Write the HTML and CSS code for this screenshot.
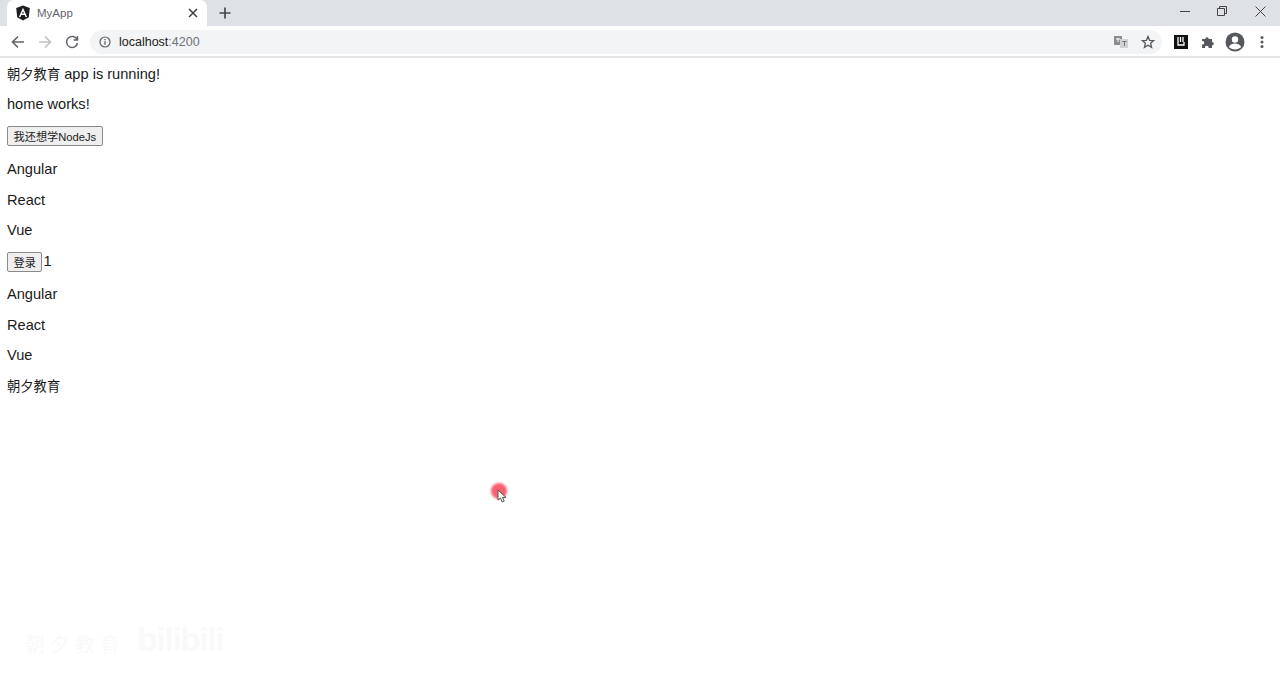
FILE: index.html
```html
<!DOCTYPE html>
<html>
  <head>
    <meta charset="UTF-8" />
    <title>MyApp</title>
    <link rel="stylesheet" href="styles.css">
  </head>
  <body>
    <div class="tabstrip">
      <div class="tab">
        <svg class="favicon" width="16" height="16" viewBox="0 0 16 16">
          <path d="M8 .5 14.800 3l-1 9.200L8 15.500 2.200 12.200 1.200 3z" fill="#1f1f23"/>
          <path d="M8 2.800 3.900 12h1.600l.8-2.100h3.400l.8 2.100h1.600zM7 8.600 8 6.200l1 2.400z" fill="#fff"/>
        </svg>
        <span class="tab-title">MyApp</span>
        <svg class="tab-close" width="10" height="10" viewBox="0 0 10 10">
          <path d="M1 1l8 8M9 1 1 9" stroke="#3c4043" stroke-width="1.500"/>
        </svg>
      </div>
      <svg class="new-tab" width="12" height="12" viewBox="0 0 12 12">
        <path d="M6 .5v11M.5 6h11" stroke="#45484c" stroke-width="1.700"/>
      </svg>
      <div class="window-controls">
        <svg class="win-min" width="10" height="10" viewBox="0 0 10 10"><path d="M0 5.500h10" stroke="#444" stroke-width="1"/></svg>
        <svg width="10" height="10" viewBox="0 0 10 10"><path d="M.5 2.500h7v7h-7zM2.500 2.500v-2h7v7h-2" fill="none" stroke="#444" stroke-width="1"/></svg>
        <svg width="11" height="11" viewBox="0 0 11 11"><path d="M.5.500l10 10M10.500.500l-10 10" stroke="#444" stroke-width="1"/></svg>
      </div>
    </div>

    <div class="toolbar">
      <svg class="nav-btn" width="14" height="14" viewBox="0 0 14 14"><path d="M13 7H2M7 1.500 1.500 7 7 12.500" fill="none" stroke="#5f6368" stroke-width="1.600"/></svg>
      <svg class="nav-btn" width="14" height="14" viewBox="0 0 14 14"><path d="M1 7h11M7 1.500 12.500 7 7 12.500" fill="none" stroke="#bdc1c6" stroke-width="1.600"/></svg>
      <svg class="nav-btn" width="14" height="14" viewBox="0 0 14 14"><path d="M12 4.500A5.500 5.500 0 1 0 12.500 8M12.500 1v4h-4" fill="none" stroke="#5f6368" stroke-width="1.500"/></svg>
      <div class="omnibox">
        <svg width="12" height="12" viewBox="0 0 12 12"><circle cx="6" cy="6" r="5" fill="none" stroke="#5f6368" stroke-width="1.200"/><path d="M6 5.200v3.600M6 3v1.300" stroke="#5f6368" stroke-width="1.300"/></svg>
        <span class="url">localhost<span class="url-port">:4200</span></span>
        <svg class="translate" width="14" height="14" viewBox="0 0 14 14"><rect x="0" y="1" width="8" height="9" fill="#8a8c8f"/><rect x="6" y="4" width="8" height="9" fill="#cfd1d4"/><path d="M8.500 6.500h4M10.500 6v5" stroke="#777" stroke-width="1"/><path d="M2 4h4M4 3v4" stroke="#fff" stroke-width="1"/></svg>
        <svg class="star" width="14" height="14" viewBox="0 0 14 14"><path d="M7 1.500 8.600 5.300l4.100.3-3.100 2.700 1 4L7 10.200l-3.600 2.100 1-4-3.100-2.700 4.100-.3z" fill="none" stroke="#55585c" stroke-width="1.300"/></svg>
      </div>
      <div class="ext-icons">
        <div class="ext-slot"><div class="ext-box"><svg width="8" height="9" viewBox="0 0 8 9"><path d="M1 0v8h6V5M3.500 0v5M6 0v5" fill="none" stroke="#fff" stroke-width="1.300"/></svg></div></div>
        <div class="ext-slot"><svg width="14" height="14" viewBox="0 0 14 14"><path d="M1 4h3.200a1.800 1.800 0 1 1 3.600 0H11v3a1.800 1.800 0 1 1 0 3.600V13H7.500a1.800 1.800 0 1 0-3.500 0H1V9.500a1.800 1.800 0 1 0 0-3.500z" fill="#55585c"/></svg></div>
        <div class="ext-slot"><svg width="20" height="20" viewBox="0 0 20 20"><circle cx="10" cy="10" r="9.500" fill="#55585c"/><circle cx="10" cy="7.500" r="3.200" fill="#fff"/><path d="M3.800 15c1.500-2.600 3.800-3.500 6.200-3.500s4.700.9 6.200 3.500c-3 3.200-9.400 3.200-12.400 0z" fill="#fff"/></svg></div>
        <div class="ext-slot"><svg width="4" height="14" viewBox="0 0 4 14"><circle cx="2" cy="2.500" r="1.500" fill="#55585c"/><circle cx="2" cy="7" r="1.500" fill="#55585c"/><circle cx="2" cy="11.500" r="1.500" fill="#55585c"/></svg></div>
      </div>
    </div>

    <div class="page">
      <p><span class="cjk">朝夕教育</span> app is running!</p>
      <p>home works!</p>
      <button class="learn-btn">我还想学NodeJs</button>
      <p>Angular</p>
      <p>React</p>
      <p>Vue</p>
      <div class="login-row"><button>登录</button><span class="count">1</span></div>
      <p>Angular</p>
      <p>React</p>
      <p>Vue</p>
      <p><span class="cjk">朝夕教育</span></p>
    </div>

    <div class="cursor-mark"></div>
    <svg class="cursor-arrow" width="10" height="14" viewBox="0 0 10 14"><path d="M1 1v10l2.500-2 1.700 4 2-.8-1.700-3.800H9z" fill="#fff" stroke="#555" stroke-width="1"/></svg>
    <div class="watermark"><span class="watermark-name">朝夕教育</span><span class="watermark-logo">bilibili</span></div>
  </body>
</html>
```

FILE: styles.css
```css
body {
  margin: 0;
  height: 682px;
  overflow: hidden;
  background: #fff;
  color: #1a1a1a;
  font-family: "Liberation Sans", "Noto Sans CJK SC", sans-serif;
  position: relative;
}

/* Browser chrome */
.tabstrip {
  display: flex;
  align-items: center;
  height: 26px;
  background: #dee1e6;
  padding-left: 7px;
}

.tab {
  display: flex;
  align-items: center;
  box-sizing: border-box;
  width: 200px;
  height: 26px;
  padding: 0 9px 0 8px;
  background: #fff;
  border-radius: 7px 7px 0 0;
}

.tab-title {
  flex: 1;
  margin-left: 6px;
  font-size: 11.5px;
  color: #5f6368;
}

.new-tab {
  margin-left: 12px;
}

.window-controls {
  display: flex;
  align-items: center;
  gap: 28px;
  margin: -4px 14px 0 auto;
}

.win-min {
  margin-right: -1px;
}

.toolbar {
  display: flex;
  align-items: center;
  box-sizing: border-box;
  height: 32px;
  padding: 1px 4.5px 0 11px;
  background: #fff;
  border-bottom: 2px solid #e3e4e6;
}

.nav-btn {
  margin-right: 13px;
}

.omnibox {
  flex: 1;
  display: flex;
  align-items: center;
  height: 24px;
  margin-left: -2px;
  padding: 0 7px 0 9px;
  background: #f3f4f5;
  border-radius: 12px;
}

.url {
  flex: 1;
  margin-left: 8px;
  font-size: 12.5px;
  color: #222;
}

.url-port {
  color: #70757a;
}

.translate {
  margin-right: 13px;
}

.ext-icons {
  display: flex;
  align-items: center;
  margin-left: 5.5px;
}

.ext-slot {
  display: flex;
  align-items: center;
  justify-content: center;
  width: 27px;
}

.ext-box {
  display: flex;
  align-items: center;
  justify-content: center;
  width: 14px;
  height: 14px;
  background: #111;
}

/* Page content */
.page {
  padding: 7.5px 7px 0;
  font-size: 14.6px;
}

.cjk {
  font-size: 13.3px;
}

p {
  margin: 0 0 13.5px;
  line-height: 17px;
}

button {
  display: block;
  box-sizing: border-box;
  height: 20px;
  padding: 0 5.5px;
  margin: 0 0 13.5px;
  background: #efefef;
  border: 1px solid #8a8a8a;
  border-radius: 2px;
  font-family: inherit;
  font-size: 11.2px;
  color: #222;
}

.learn-btn {
  margin: -1px 0 15.5px;
}

.login-row {
  display: flex;
  align-items: flex-start;
  margin: -2px 0 1px;
  line-height: 17px;
}

.login-row button {
  margin-top: 1px;
}

.count {
  margin: 2px 0 0 1px;
}

/* Overlays */
.cursor-mark {
  position: absolute;
  left: 491px;
  top: 483px;
  width: 16px;
  height: 16px;
  border-radius: 50%;
  background: #f9606f;
  filter: blur(1px);
}

.cursor-arrow {
  position: absolute;
  left: 497px;
  top: 489px;
}

.watermark {
  position: absolute;
  left: 25px;
  top: 618px;
  display: flex;
  align-items: flex-end;
  color: #f9f9f9;
}

.watermark-name {
  width: 112px;
  font-size: 20px;
  letter-spacing: 5px;
  line-height: 30px;
}

.watermark-logo {
  font-size: 34px;
  font-weight: bold;
  letter-spacing: -1.5px;
  line-height: 42px;
}
```
